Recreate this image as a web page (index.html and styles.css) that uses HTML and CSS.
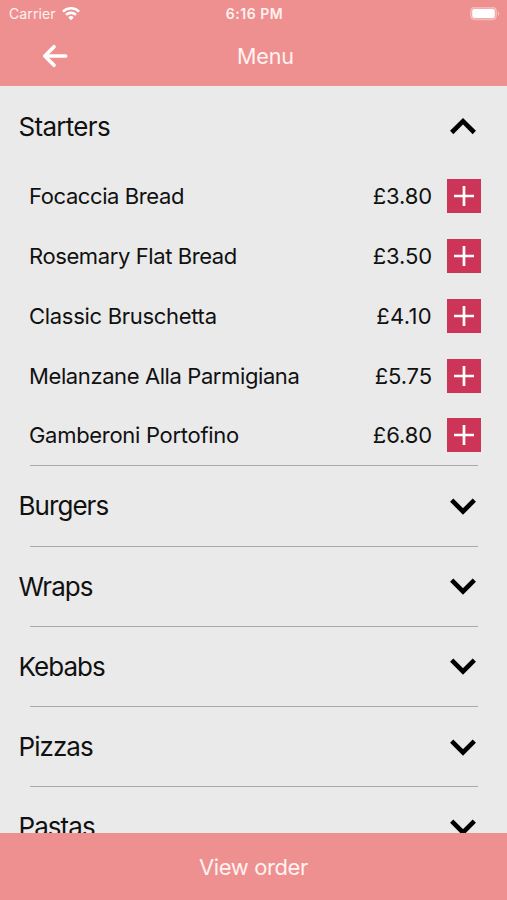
FILE: index.html
```html
<!DOCTYPE html>
<html lang="en">
<head>
<meta charset="utf-8">
<meta name="viewport" content="width=device-width">
<title>Menu</title>
<link rel="stylesheet" href="styles.css">
</head>
<body>
<header>
  <div class="status">
    <div class="carrier"><span>Carrier</span>
      <svg width="18" height="14" viewBox="0 0 18 14" fill="none" stroke="#fff" stroke-width="2.6"><path d="M.9 4.6a11.5 11.5 0 0 1 16.2 0M4 7.9a7.2 7.2 0 0 1 10 0"/><path d="M9 13.2 6.3 10.4a3.8 3.8 0 0 1 5.4 0z" fill="#fff" stroke="none"/></svg>
    </div>
    <time>6:16 PM</time>
    <svg class="battery" width="30" height="14" viewBox="0 0 30 14"><rect x=".5" y=".2" width="26" height="12.6" rx="4" fill="#fff" fill-opacity=".25" stroke="#fff" stroke-opacity=".3"/><rect x="2.3" y="2" width="22.4" height="9" rx="2" fill="#fff"/><path d="M28 4.2q2.4 2.3 0 4.6z" fill="#fff" fill-opacity=".5"/></svg>
  </div>
  <div class="nav">
    <svg class="back" width="26" height="24" viewBox="0 0 26 24"><path d="M23.6 12H4M12 2.7 2.8 12 12 21.3"/></svg>
    <h1>Menu</h1>
  </div>
</header>
<main>
  <section>
    <h2 class="first"><span>Starters</span><svg class="chev" width="28" height="18" viewBox="0 0 28 18"><path d="M2.7 15.5 14 4.2 25.3 15.5"/></svg></h2>
    <ul>
      <li><span class="name">Focaccia Bread</span><span class="price">£3.80</span><button aria-label="Add"><svg width="34" height="34" viewBox="0 0 34 34"><path d="M17 7v20M7 17h20"/></svg></button></li>
      <li><span class="name">Rosemary Flat Bread</span><span class="price">£3.50</span><button aria-label="Add"><svg width="34" height="34" viewBox="0 0 34 34"><path d="M17 7v20M7 17h20"/></svg></button></li>
      <li><span class="name wide">Classic Bruschetta</span><span class="price loose">£4.10</span><button aria-label="Add"><svg width="34" height="34" viewBox="0 0 34 34"><path d="M17 7v20M7 17h20"/></svg></button></li>
      <li><span class="name">Melanzane Alla Parmigiana</span><span class="price">£5.75</span><button aria-label="Add"><svg width="34" height="34" viewBox="0 0 34 34"><path d="M17 7v20M7 17h20"/></svg></button></li>
      <li><span class="name wide">Gamberoni Portofino</span><span class="price">£6.80</span><button aria-label="Add"><svg width="34" height="34" viewBox="0 0 34 34"><path d="M17 7v20M7 17h20"/></svg></button></li>
    </ul>
  </section>
  <section><h2><span>Burgers</span><svg class="chev" width="28" height="18" viewBox="0 0 28 18"><path d="M2.7 3.2 14 14.5 25.3 3.2"/></svg></h2></section>
  <section><h2><span>Wraps</span><svg class="chev" width="28" height="18" viewBox="0 0 28 18"><path d="M2.7 3.2 14 14.5 25.3 3.2"/></svg></h2></section>
  <section><h2><span>Kebabs</span><svg class="chev" width="28" height="18" viewBox="0 0 28 18"><path d="M2.7 3.2 14 14.5 25.3 3.2"/></svg></h2></section>
  <section><h2><span>Pizzas</span><svg class="chev" width="28" height="18" viewBox="0 0 28 18"><path d="M2.7 3.2 14 14.5 25.3 3.2"/></svg></h2></section>
  <section><h2><span>Pastas</span><svg class="chev" width="28" height="18" viewBox="0 0 28 18"><path d="M2.7 3.2 14 14.5 25.3 3.2"/></svg></h2></section>
</main>
<footer><span>View order</span></footer>
</body>
</html>
```
FILE: styles.css
```css
* { box-sizing: border-box; margin: 0; padding: 0; }
body {
  height: 900px; display: flex; flex-direction: column; overflow: hidden;
  background: #eaeaea; color: #111; font-family: Inter, sans-serif;
}
header { height: 86px; flex: none; background: #ee9090; color: #fff2f0; }
.status {
  height: 27px; padding: 0 7px 0 9px; display: grid;
  grid-template-columns: 1fr auto 1fr; align-items: center; font-size: 14px;
}
.carrier { display: flex; align-items: center; gap: 6px; letter-spacing: .1px; }
.status time { font-weight: 600; letter-spacing: .5px; }
.battery { justify-self: end; }
.nav { height: 58px; padding: 0 42px; display: flex; align-items: center; }
.back { fill: none; stroke: #fff; stroke-width: 3.7; stroke-linecap: round; stroke-linejoin: round; }
h1 { margin-left: 169px; font-size: 21.5px; font-weight: 400; letter-spacing: -.1px; }
main { flex: 1; min-height: 0; overflow: hidden; }
h2 {
  height: 79.2px; padding: 0 30.5px 0 18.5px; display: flex; align-items: center;
  justify-content: space-between; font-size: 26px; font-weight: 400; letter-spacing: -.95px;
}
h2.first { height: 80.4px; letter-spacing: -.7px; }
section::after { content: ""; display: block; height: 1px; margin: 0 29px 0 30px; background: #aaa; }
.chev { fill: none; stroke: #000; stroke-width: 4.6; }
ul { list-style: none; }
li { height: 59.8px; padding: 0 26px 0 29px; display: flex; align-items: center; font-size: 22px; }
.name { flex: 1; letter-spacing: -.4px; }
.wide { letter-spacing: -.3px; }
.price { margin-right: 15px; letter-spacing: -.1px; }
.loose { letter-spacing: .3px; }
button { width: 34px; height: 34px; border: 0; background: #cc3558; }
button svg { display: block; fill: none; stroke: #fff; stroke-width: 2.7; }
footer {
  height: 67px; flex: none; display: flex; align-items: center; justify-content: center;
  background: #ee9090; color: #fff2f0; font-size: 22px; letter-spacing: -.4px;
}
```
